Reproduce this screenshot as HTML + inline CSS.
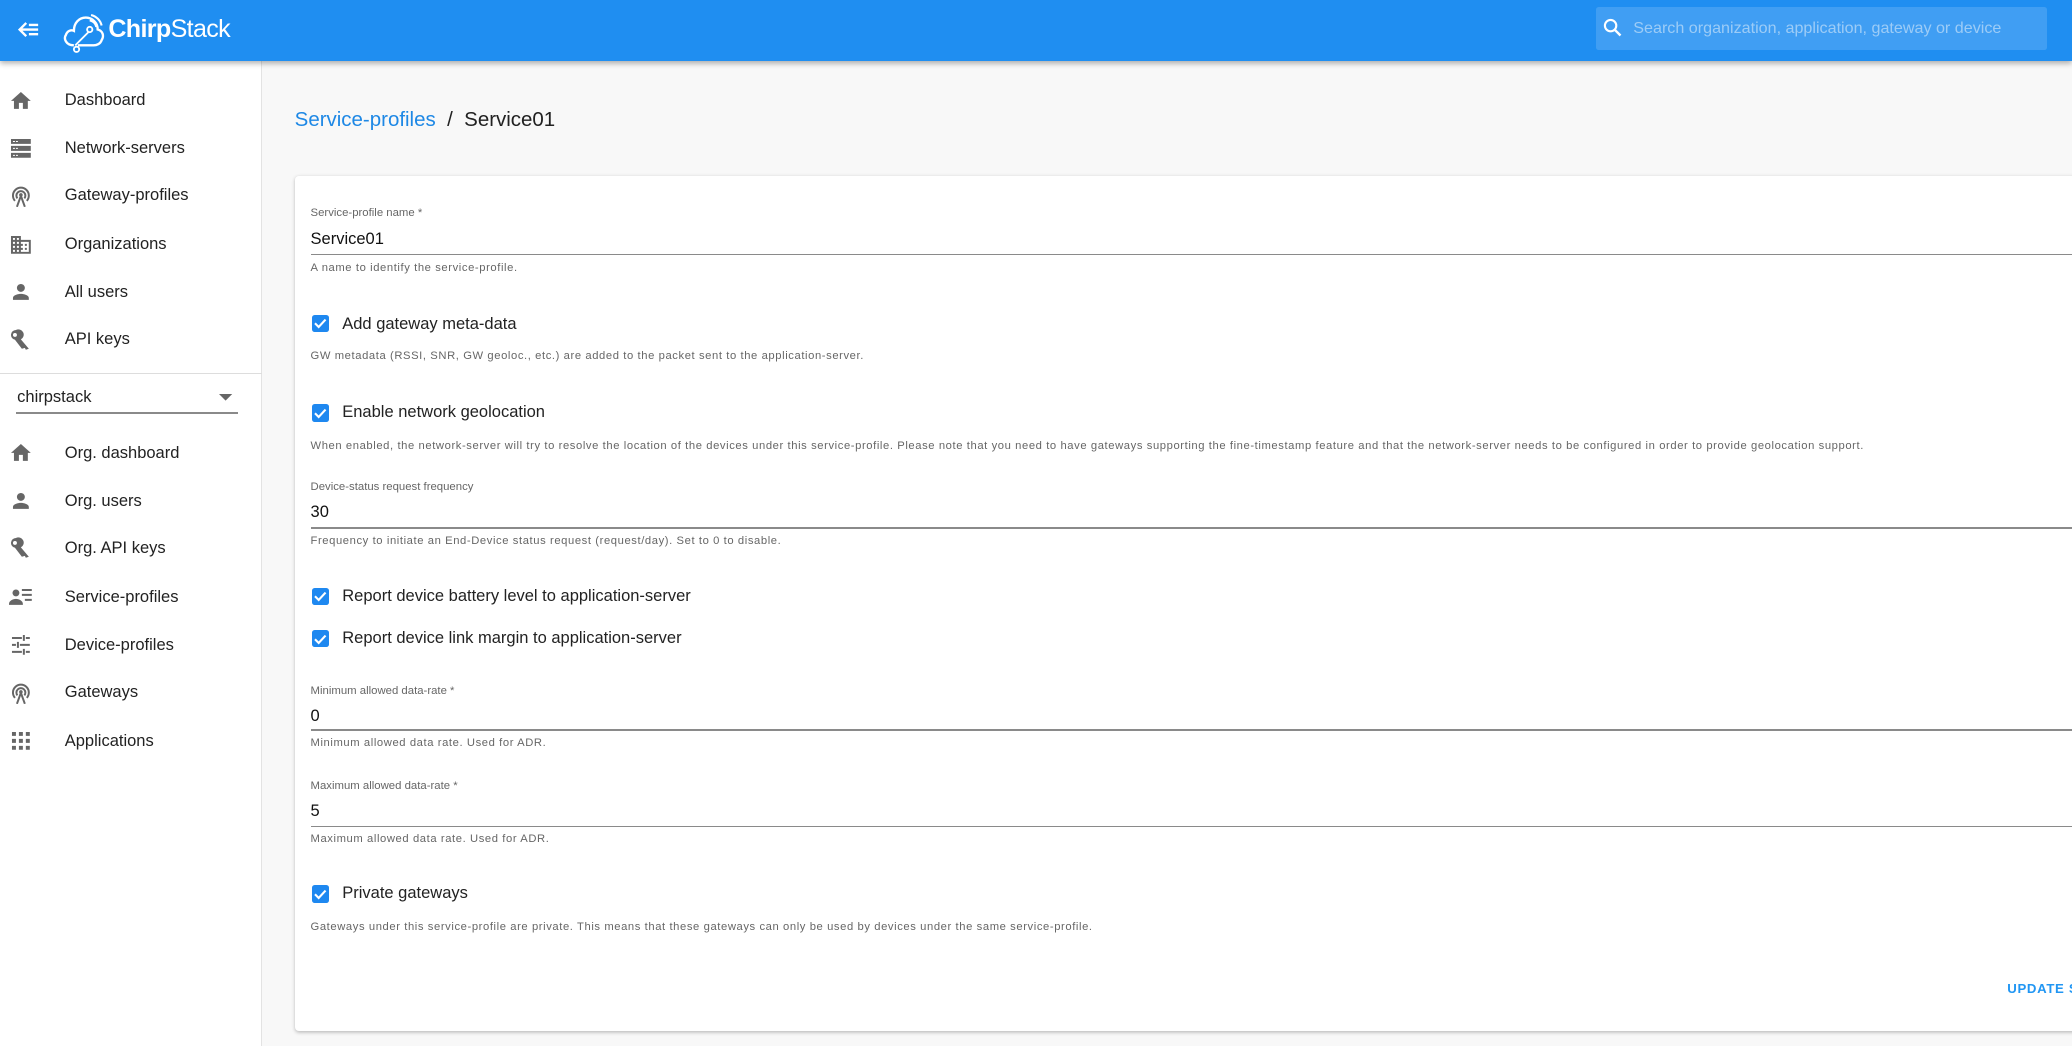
<!DOCTYPE html>
<html><head><meta charset="utf-8"><style>
*{box-sizing:border-box;margin:0;padding:0}
html,body{width:2072px;height:1046px;overflow:hidden;background:#f8f8f8}
#w{zoom:1.32143;width:1568px;height:792px;position:relative;font-family:"Liberation Sans",sans-serif;color:#222;overflow:hidden;background:#f8f8f8}
.hdr{position:absolute;left:0;top:0;width:1568px;height:46px;background:#1f8ef1;box-shadow:0 2px 4px rgba(0,0,0,.3);z-index:3}
.side{position:absolute;left:0;top:46px;width:198px;height:746px;background:#fff;border-right:1px solid #e3e3e3}
.it{position:absolute;left:0;height:20px;width:198px}
.it svg{position:absolute;left:7px;top:1px}
.it span{position:absolute;left:49px;top:3px;font-size:12.5px;color:#222}
.t{position:absolute;white-space:nowrap}
.lbl{font-size:8.6px;color:#666}
.val{font-size:12.5px;color:#111}
.help{font-size:8.5px;color:#666;letter-spacing:.45px}
.line{position:absolute;left:235px;width:1340px;height:1px;background:#8a8a8a}
.cb{position:absolute;left:236px;width:13px;height:13px;background:#1e88f0;border-radius:2px}
.cb svg{position:absolute;left:1px;top:1px}
.cl{font-size:12.5px;color:#222;left:259px}
</style></head><body><div id="w">
<div class="hdr">
<svg style="position:absolute;left:13px;top:14px" width="18" height="16" viewBox="0 0 18 16"><path d="M7 3 L2 8 L7 13 M2 8 H16 M9 4.5 H16 M9 11.5 H16" stroke="#fff" stroke-width="1.8" fill="none"/></svg>
<svg style="position:absolute;left:47px;top:8px" width="34" height="32" viewBox="0 0 34 32"><path d="M9 26 C3 26 1 21 3 18 C4 15 7 14 9 15 C9 9 13 5 18 5 C23 5 27 9 27 14 C31 15 32 19 30 22 C29 25 26 26 24 26 L12 26" stroke="#fff" stroke-width="1.8" fill="none"/><path d="M22 3 C26 4 29 7 30 11 M21 7 C24 8 25 9 26 12" stroke="#fff" stroke-width="1.6" fill="none"/><circle cx="21" cy="14" r="2" stroke="#fff" stroke-width="1.4" fill="none"/><circle cx="11" cy="29" r="2" stroke="#fff" stroke-width="1.4" fill="none"/><path d="M20 16 L10 26" stroke="#fff" stroke-width="1.4"/></svg>
<div class="t" style="left:82px;top:11px;font-size:19px;color:#fff;letter-spacing:-.5px"><b>Chirp</b>Stack</div>
<div style="position:absolute;left:1208px;top:5px;width:341px;height:33px;background:rgba(255,255,255,.15);border-radius:2px"></div>
<svg style="position:absolute;left:1212px;top:13px" width="16" height="16" viewBox="0 0 16 16"><circle cx="6.5" cy="6.5" r="4.3" stroke="#fff" stroke-width="1.6" fill="none"/><path d="M9.6 9.6 L14 14" stroke="#fff" stroke-width="1.8"/></svg>
<div class="t" style="left:1236px;top:14px;font-size:12.2px;color:#9cccf7">Search organization, application, gateway or device</div>
</div>
<div class="side">
<div class="it" style="top:20px"><svg width="18" height="18" viewBox="0 0 24 24"><path fill="#666" d="M10 20v-6h4v6h5v-8h3L12 3 2 12h3v8z"/></svg><span>Dashboard</span></div>
<div class="it" style="top:56px"><svg width="18" height="18" viewBox="0 0 24 24"><path fill="#666" d="M2 3h20v5H2zM2 10h20v5H2zM2 17h20v5H2z"/><path fill="#fff" d="M4 5h2v1H4zM7 5h2v1H7zM4 12h2v1H4zM7 12h2v1H7zM4 19h2v1H4zM7 19h2v1H7z"/></svg><span>Network-servers</span></div>
<div class="it" style="top:92px"><svg width="18" height="18" viewBox="0 0 24 24"><path fill="none" stroke="#666" stroke-width="2" d="M6 17A8 8 0 1 1 18 17M8.5 14.5A4.5 4.5 0 1 1 15.5 14.5M12 12L8 23M12 12l4 11"/><circle cx="12" cy="11" r="1.8" fill="#666"/></svg><span>Gateway-profiles</span></div>
<div class="it" style="top:129px"><svg width="18" height="18" viewBox="0 0 24 24"><path fill="#666" d="M12 7V3H2v18h20V7H12zM6 19H4v-2h2v2zm0-4H4v-2h2v2zm0-4H4V9h2v2zm0-4H4V5h2v2zm4 12H8v-2h2v2zm0-4H8v-2h2v2zm0-4H8V9h2v2zm0-4H8V5h2v2zm10 12h-8v-2h2v-2h-2v-2h2v-2h-2V9h8v10zm-2-8h-2v2h2v-2zm0 4h-2v2h2v-2z"/></svg><span>Organizations</span></div>
<div class="it" style="top:165px"><svg width="18" height="18" viewBox="0 0 24 24"><path fill="#666" d="M12 12c2.2 0 4-1.8 4-4s-1.8-4-4-4-4 1.8-4 4 1.8 4 4 4zm0 2c-2.7 0-8 1.3-8 4v2h16v-2c0-2.7-5.3-4-8-4z"/></svg><span>All users</span></div>
<div class="it" style="top:201px"><svg width="18" height="18" viewBox="0 0 24 24"><path fill="#666" d="M7 2a5 5 0 0 0-1 9.9L13 21l3-1 1 2 3-1-8-9.5A5 5 0 0 0 7 2zm-1 3a2 2 0 1 1 0 4 2 2 0 0 1 0-4z"/></svg><span>API keys</span></div>
<div style="position:absolute;left:0;top:236px;width:198px;height:1px;background:#ddd"></div>
<div class="t" style="left:13px;top:248px;font-size:12.5px;color:#222">chirpstack</div>
<svg style="position:absolute;left:166px;top:252px" width="10" height="6"><path d="M0 0h10L5 5z" fill="#666"/></svg>
<div style="position:absolute;left:12px;top:266px;width:168px;height:1px;background:#8a8a8a"></div>
<div class="it" style="top:287px"><svg width="18" height="18" viewBox="0 0 24 24"><path fill="#666" d="M10 20v-6h4v6h5v-8h3L12 3 2 12h3v8z"/></svg><span>Org. dashboard</span></div>
<div class="it" style="top:323px"><svg width="18" height="18" viewBox="0 0 24 24"><path fill="#666" d="M12 12c2.2 0 4-1.8 4-4s-1.8-4-4-4-4 1.8-4 4 1.8 4 4 4zm0 2c-2.7 0-8 1.3-8 4v2h16v-2c0-2.7-5.3-4-8-4z"/></svg><span>Org. users</span></div>
<div class="it" style="top:359px"><svg width="18" height="18" viewBox="0 0 24 24"><path fill="#666" d="M7 2a5 5 0 0 0-1 9.9L13 21l3-1 1 2 3-1-8-9.5A5 5 0 0 0 7 2zm-1 3a2 2 0 1 1 0 4 2 2 0 0 1 0-4z"/></svg><span>Org. API keys</span></div>
<div class="it" style="top:396px"><svg width="18" height="18" viewBox="0 0 24 24"><circle cx="7" cy="8" r="3.5" fill="#666"/><path fill="#666" d="M0 19c0-3 4-5 7-5s7 2 7 5v1H0z"/><path stroke="#666" stroke-width="2" d="M13 5h10M13 10h10M16 15h7"/></svg><span>Service-profiles</span></div>
<div class="it" style="top:432px"><svg width="18" height="18" viewBox="0 0 24 24"><path fill="none" stroke="#666" stroke-width="2" d="M3 5h10M17 5h4M15 2v6M3 12h4M11 12h10M9 9v6M3 19h10M17 19h4M15 16v6"/></svg><span>Device-profiles</span></div>
<div class="it" style="top:468px"><svg width="18" height="18" viewBox="0 0 24 24"><path fill="none" stroke="#666" stroke-width="2" d="M6 17A8 8 0 1 1 18 17M8.5 14.5A4.5 4.5 0 1 1 15.5 14.5M12 12L8 23M12 12l4 11"/><circle cx="12" cy="11" r="1.8" fill="#666"/></svg><span>Gateways</span></div>
<div class="it" style="top:505px"><svg width="18" height="18" viewBox="0 0 24 24"><path fill="#666" d="M3 3h4v4H3zM10 3h4v4h-4zM17 3h4v4h-4zM3 10h4v4H3zM10 10h4v4h-4zM17 10h4v4h-4zM3 17h4v4H3zM10 17h4v4h-4zM17 17h4v4h-4z"/></svg><span>Applications</span></div>
</div>
<div class="t" style="left:223px;top:82px;font-size:15.5px"><span style="color:#1e88e5">Service-profiles</span>&nbsp; / &nbsp;Service01</div>
<div style="position:absolute;left:223px;top:133px;width:1360px;height:647px;background:#fff;border-radius:3px;box-shadow:0 1px 3px rgba(0,0,0,.25)"></div>
<div class="t lbl" style="left:235px;top:157px">Service-profile name *</div>
<div class="t val" style="left:235px;top:174px">Service01</div>
<div class="line" style="top:192px"></div>
<div class="t help" style="left:235px;top:198px">A name to identify the service-profile.</div>
<div class="cb" style="top:238px"><svg width="11" height="11" viewBox="0 0 11 11"><path d="M1.5 5.5l2.8 2.8 5.2-5.6" stroke="#fff" stroke-width="1.6" fill="none"/></svg></div>
<div class="t cl" style="top:238px">Add gateway meta-data</div>
<div class="t help" style="left:235px;top:265px">GW metadata (RSSI, SNR, GW geoloc., etc.) are added to the packet sent to the application-server.</div>
<div class="cb" style="top:306px"><svg width="11" height="11" viewBox="0 0 11 11"><path d="M1.5 5.5l2.8 2.8 5.2-5.6" stroke="#fff" stroke-width="1.6" fill="none"/></svg></div>
<div class="t cl" style="top:305px">Enable network geolocation</div>
<div class="t help" style="left:235px;top:333px">When enabled, the network-server will try to resolve the location of the devices under this service-profile. Please note that you need to have gateways supporting the fine-timestamp feature and that the network-server needs to be configured in order to provide geolocation support.</div>
<div class="t lbl" style="left:235px;top:364px">Device-status request frequency</div>
<div class="t val" style="left:235px;top:381px">30</div>
<div class="line" style="top:399px"></div>
<div class="t help" style="left:235px;top:405px">Frequency to initiate an End-Device status request (request/day). Set to 0 to disable.</div>
<div class="cb" style="top:445px"><svg width="11" height="11" viewBox="0 0 11 11"><path d="M1.5 5.5l2.8 2.8 5.2-5.6" stroke="#fff" stroke-width="1.6" fill="none"/></svg></div>
<div class="t cl" style="top:444px">Report device battery level to application-server</div>
<div class="cb" style="top:477px"><svg width="11" height="11" viewBox="0 0 11 11"><path d="M1.5 5.5l2.8 2.8 5.2-5.6" stroke="#fff" stroke-width="1.6" fill="none"/></svg></div>
<div class="t cl" style="top:476px">Report device link margin to application-server</div>
<div class="t lbl" style="left:235px;top:518px">Minimum allowed data-rate *</div>
<div class="t val" style="left:235px;top:535px">0</div>
<div class="line" style="top:552px"></div>
<div class="t help" style="left:235px;top:558px">Minimum allowed data rate. Used for ADR.</div>
<div class="t lbl" style="left:235px;top:590px">Maximum allowed data-rate *</div>
<div class="t val" style="left:235px;top:607px">5</div>
<div class="line" style="top:625px"></div>
<div class="t help" style="left:235px;top:630px">Maximum allowed data rate. Used for ADR.</div>
<div class="cb" style="top:670px"><svg width="11" height="11" viewBox="0 0 11 11"><path d="M1.5 5.5l2.8 2.8 5.2-5.6" stroke="#fff" stroke-width="1.6" fill="none"/></svg></div>
<div class="t cl" style="top:669px">Private gateways</div>
<div class="t help" style="left:235px;top:697px">Gateways under this service-profile are private. This means that these gateways can only be used by devices under the same service-profile.</div>
<div class="t" style="left:1519px;top:742px;font-size:10px;font-weight:bold;color:#2196f3;letter-spacing:.5px">UPDATE SERVICE-PROFILE</div>
</div></body></html>
